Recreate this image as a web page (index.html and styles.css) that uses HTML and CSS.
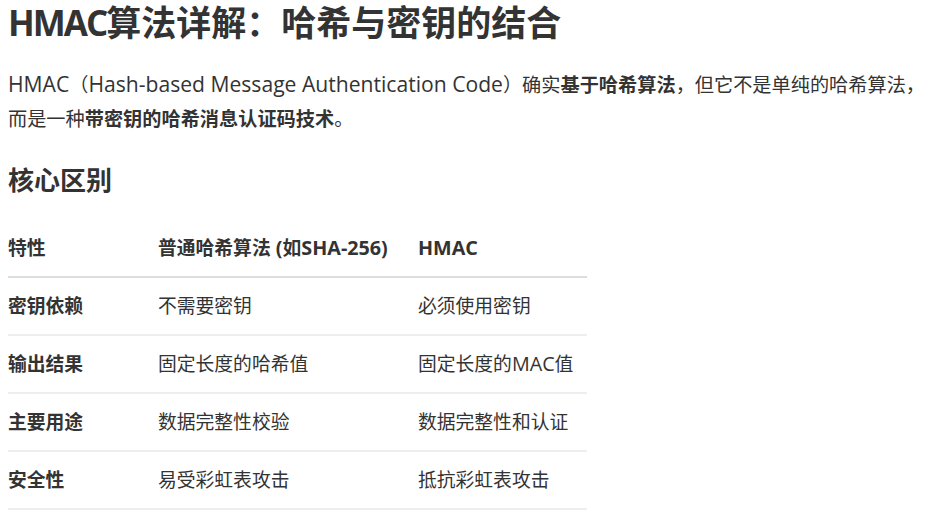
FILE: index.html
```html
<!DOCTYPE html>
<html lang="zh-CN">
<head>
<meta charset="utf-8">
<title>HMAC算法详解</title>
<link rel="stylesheet" href="styles.css">
</head>
<body>
<article class="doc">
  <h1 class="title"><span class="en-tight">HMAC</span>算法详解：哈希与密钥的结合</h1>
  <p class="lead"><span class="en">HMAC</span>（<span class="en">Hash-based Message Authentication Code</span>）确实<strong>基于哈希算法</strong>，但它不是单纯的哈希算法，而是一种<strong>带密钥的哈希消息认证码技术</strong>。</p>
  <h2 class="section">核心区别</h2>
  <table class="cmp">
    <colgroup><col class="c1"><col class="c2"><col class="c3"></colgroup>
    <thead>
      <tr><th>特性</th><th>普通哈希算法<span class="en"> (</span>如<span class="en">SHA-256)</span></th><th><span class="en">HMAC</span></th></tr>
    </thead>
    <tbody>
      <tr><td><strong>密钥依赖</strong></td><td>不需要密钥</td><td>必须使用密钥</td></tr>
      <tr><td><strong>输出结果</strong></td><td>固定长度的哈希值</td><td>固定长度的<span class="en">MAC</span>值</td></tr>
      <tr><td><strong>主要用途</strong></td><td>数据完整性校验</td><td>数据完整性和认证</td></tr>
      <tr><td><strong>安全性</strong></td><td>易受彩虹表攻击</td><td>抵抗彩虹表攻击</td></tr>
    </tbody>
  </table>
</article>
</body>
</html>
```

FILE: styles.css
```css
html, body {
  margin: 0;
  padding: 0;
  background: #fff;
}
body {
  font-family: "Open Sans", "Noto Sans CJK SC", sans-serif;
  color: #333;
  font-size: 19.2px;
}
.doc {
  padding: 0 8px;
}
.title {
  font-size: 35px;
  line-height: 46px;
  font-weight: 700;
  margin: 0 0 21px;
}
.en-tight {
  letter-spacing: -2px;
}
.en {
  font-size: 1.1em;
}
.lead {
  line-height: 34px;
  margin: 0;
}
.lead strong {
  font-weight: 700;
}
.section {
  font-size: 26px;
  line-height: 36px;
  font-weight: 700;
  margin: 26px 0 22px;
}
.cmp {
  border-collapse: collapse;
  font-size: 18.8px;
  line-height: 30px;
  width: 579px;
  table-layout: fixed;
}
.cmp .c1 { width: 150px; }
.cmp .c2 { width: 260px; }
.cmp .c3 { width: 169px; }
.cmp th, .cmp td {
  text-align: left;
  padding: 0;
  height: 56px;
  vertical-align: middle;
  border-bottom: 2px solid #eeeeee;
  white-space: nowrap;
}
.cmp th {
  font-weight: 700;
  border-bottom-color: #dddddd;
}
.cmp .en {
  font-size: 1.05em;
}
```
